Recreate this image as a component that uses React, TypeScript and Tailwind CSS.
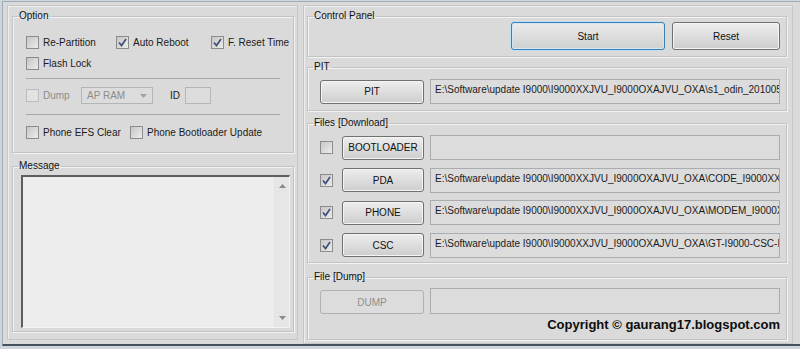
import React from 'react';

const FONT = "font-['Liberation_Sans',Arial,sans-serif]";

function Check({ checked, disabled }: { checked?: boolean; disabled?: boolean }) {
  return (
    <span
      className={`flex h-[13px] w-[13px] shrink-0 items-center justify-center border ${
        disabled ? 'border-[#bcbcbc] bg-[#e2e2e2]' : 'border-[#8c8c8c] bg-gradient-to-br from-[#c6c6c6] to-[#ececec]'
      }`}
    >
      {checked && (
        <svg width="11" height="11" viewBox="0 0 11 11">
          <path d="M2 5.5 L4.5 8.5 L9 2" fill="none" stroke="#3d5278" strokeWidth="1.7" />
        </svg>
      )}
    </span>
  );
}

function CheckLabel({ label, checked, disabled, w }: { label: string; checked?: boolean; disabled?: boolean; w: string }) {
  return (
    <div className={`flex shrink-0 items-center gap-[4px] whitespace-nowrap ${w}`}>
      <Check checked={checked} disabled={disabled} />
      <span className={disabled ? 'text-[#8d8d8d]' : 'text-[#1b1b1b]'}>{label}</span>
    </div>
  );
}

// group box: etched frame with a caption sitting on the top line
function Group({ title, className, inner, children }: { title: string; className?: string; inner?: string; children: React.ReactNode }) {
  return (
    <fieldset className={`m-0 min-w-0 border border-[#c3c3c3] p-0 shadow-[inset_1px_1px_0_#f3f3f3,1px_1px_0_#f3f3f3] ${className ?? ''}`}>
      <legend className="ml-[5px] px-[1px] leading-[12px] text-[#111]">{title}</legend>
      <div className={inner}>{children}</div>
    </fieldset>
  );
}

function Btn({ label, w, h = 'h-[24px]', disabled, primary }: { label: string; w: string; h?: string; disabled?: boolean; primary?: boolean }) {
  const base = 'flex shrink-0 items-center justify-center rounded-[3px] border';
  if (disabled)
    return <div className={`${base} ${w} ${h} border-[#adb2b5] bg-[#dcdcdc] text-[#8f8f8f]`}>{label}</div>;
  if (primary)
    return (
      <div className={`${base} ${w} ${h} border-[#3c7fb1] bg-gradient-to-b from-[#ebebeb] to-[#cfd0d1] shadow-[0_0_0_1px_#bfdff2,inset_0_0_0_1px_#d2e8f5] text-[#111]`}>
        {label}
      </div>
    );
  return (
    <div className={`${base} ${w} ${h} border-[#707070] bg-gradient-to-b from-[#eeeeee] to-[#cdcdcd] shadow-[inset_0_0_0_1px_#f4f4f4] text-[#111]`}>
      {label}
    </div>
  );
}

function PathBox({ text, h = 'h-[25px]' }: { text?: string; h?: string }) {
  return (
    <div className={`block w-[350px] shrink-0 ${h} overflow-hidden whitespace-nowrap border border-[#a9acb0] bg-[#dcdcdc] pl-[4px] pt-[3px] leading-[13px] text-[#1b1b1b]`}>
      {text}
    </div>
  );
}

const BASE = 'E:\\Software\\update I9000\\I9000XXJVU_I9000OXAJVU_OXA\\';

const files = [
  { name: 'BOOTLOADER', checked: false, path: '' },
  { name: 'PDA', checked: true, path: BASE + 'CODE_I9000XXJVU' },
  { name: 'PHONE', checked: true, path: BASE + 'MODEM_I9000XX' },
  { name: 'CSC', checked: true, path: BASE + 'GT-I9000-CSC-MUL' },
];

export default function App() {
  return (
    <div className={`h-[349px] w-[800px] overflow-hidden bg-[#cfd5db] pl-[2px] pt-[1px] text-[10px] ${FONT}`}>
      <div className="flex h-[345px] gap-[5px] border-t border-l border-b-[2px] border-[#9eadbb] border-b-[#44515e] bg-[#dadada] pl-[4px] pt-[3px]">
        {/* left column */}
        <div className="flex h-[335px] w-[291px] flex-col border border-[#c6c6c6] pl-[4px] pr-[3px] pt-[4px] shadow-[inset_1px_1px_0_#eeeeee]">
          <Group title="Option" className="h-[143px]" inner="px-[13px] pt-[14px]">
            <div className="flex h-[13px] items-center">
              <CheckLabel label="Re-Partition" w="w-[90px]" />
              <CheckLabel label="Auto Reboot" checked w="w-[95px]" />
              <CheckLabel label="F. Reset Time" checked w="w-[70px]" />
            </div>
            <div className="mt-[8px] flex h-[13px] items-center">
              <CheckLabel label="Flash Lock" w="w-[90px]" />
            </div>
            <div className="mt-[8px] h-[1px] w-[254px] bg-[#a9a9a9]" />
            <div className="mt-[8px] flex h-[17px] items-center">
              <CheckLabel label="Dump" disabled w="w-[55px]" />
              <div className="flex h-[17px] w-[72px] items-center justify-between border border-[#b3b6b9] bg-[#dcdcdc] pl-[5px] pr-[5px] text-[#8d8d8d]">
                <span>AP RAM</span>
                <svg width="7" height="4" viewBox="0 0 7 4">
                  <path d="M0 0 L7 0 L3.5 4 Z" fill="#a2a2a2" />
                </svg>
              </div>
              <span className="ml-[17px] text-[#1b1b1b]">ID</span>
              <div className="ml-[5px] h-[17px] w-[26px] border border-[#b3b6b9] bg-[#dcdcdc]" />
            </div>
            <div className="mt-[10px] h-[1px] w-[254px] bg-[#a9a9a9]" />
            <div className="mt-[11px] flex h-[13px] items-center">
              <CheckLabel label="Phone EFS Clear" w="w-[104px]" />
              <CheckLabel label="Phone Bootloader Update" w="w-[140px]" />
            </div>
          </Group>
          <Group title="Message" className="mt-[7px] h-[172px]" inner="pb-[2px] pl-[8px] pr-[2px] pt-[3px]">
            <div className="flex h-[153px] w-[269px] border-l-2 border-t-2 border-[#5e5e5e] border-b border-r border-b-[#f4f4f4] border-r-[#f4f4f4] bg-[#ededed]">
              <div className="flex-1" />
              <div className="flex w-[15px] flex-col items-center justify-between border-l border-[#e4e4e4] bg-[#e6e6e6] py-[7px]">
                <svg width="7" height="4" viewBox="0 0 7 4">
                  <path d="M0 4 L7 4 L3.5 0 Z" fill="#8a8a8a" />
                </svg>
                <svg width="7" height="4" viewBox="0 0 7 4">
                  <path d="M0 0 L7 0 L3.5 4 Z" fill="#8a8a8a" />
                </svg>
              </div>
            </div>
          </Group>
        </div>

        {/* right column */}
        <div className="flex h-[339px] w-[490px] flex-col border border-[#c6c6c6] pl-[3px] pt-[4px] shadow-[inset_1px_1px_0_#eeeeee]">
          <Group title="Control Panel" className="h-[47px] w-[480px]" inner="pr-[6px]">
            <div className="flex justify-end gap-[7px]">
              <Btn label="Start" w="w-[154px]" h="h-[28px]" primary />
              <Btn label="Reset" w="w-[108px]" h="h-[28px]" />
            </div>
          </Group>
          <Group title="PIT" className="mt-[4px] h-[50px] w-[480px]" inner="pl-[12px] pt-[6px]">
            <div className="flex items-center gap-[6px]">
              <Btn label="PIT" w="w-[104px]" />
              <PathBox text={BASE + 's1_odin_2010051'} />
            </div>
          </Group>
          <Group title="Files [Download]" className="mt-[6px] h-[146px] w-[480px]" inner="pl-[12px] pt-[6px]">
            <div className="flex flex-col gap-[7.5px]">
              {files.map(f => (
                <div key={f.name} className="flex h-[25px] items-center">
                  <Check checked={f.checked} />
                  <div className="ml-[9px] mr-[6px]">
                    <Btn label={f.name} w="w-[82px]" />
                  </div>
                  <PathBox text={f.path} />
                </div>
              ))}
            </div>
          </Group>
          <Group title="File [Dump]" className="mt-[8px] h-[69px] w-[480px]" inner="pl-[12px] pt-[5px]">
            <div className="flex items-end gap-[6px]">
              <Btn label="DUMP" w="w-[104px]" disabled />
              <PathBox h="h-[26px]" />
            </div>
            <div className="mt-[3px] w-[460px] text-right text-[13px] font-bold leading-[16px] text-[#0d0d0d]">
              Copyright © gaurang17.blogspot.com
            </div>
          </Group>
        </div>
      </div>
    </div>
  );
}
